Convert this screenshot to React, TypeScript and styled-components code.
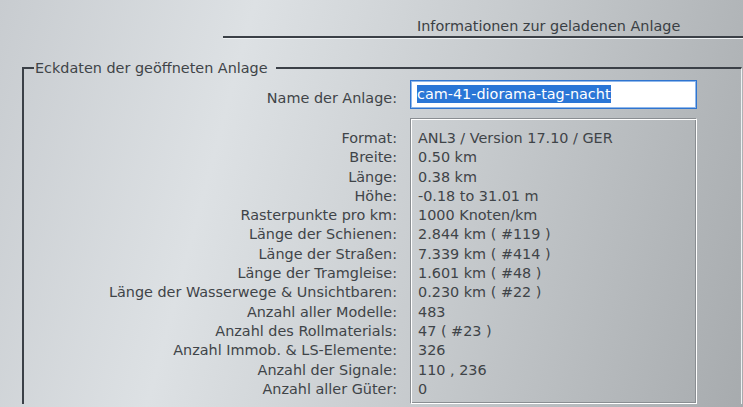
import React from "react";
import styled, { createGlobalStyle } from "styled-components";

const GlobalStyle = createGlobalStyle`
  html, body {
    margin: 0;
    padding: 0;
  }
  body {
    width: 743px;
    height: 407px;
    overflow: hidden;
    font-family: "DejaVu Sans", "Liberation Sans", sans-serif;
    font-size: 14.4px;
    color: #3f4448;
    background: linear-gradient(105deg, #c8ccd0 0%, #dde1e4 30%, #c7cbce 60%, #a7abae 100%);
  }
`;

const rows: [string, string][] = [
  ["Format:", "ANL3 / Version 17.10 / GER"],
  ["Breite:", "0.50 km"],
  ["Länge:", "0.38 km"],
  ["Höhe:", "-0.18 to 31.01 m"],
  ["Rasterpunkte pro km:", "1000 Knoten/km"],
  ["Länge der Schienen:", "2.844 km ( #119 )"],
  ["Länge der Straßen:", "7.339 km ( #414 )"],
  ["Länge der Tramgleise:", "1.601 km ( #48 )"],
  ["Länge der Wasserwege & Unsichtbaren:", "0.230 km ( #22 )"],
  ["Anzahl aller Modelle:", "483"],
  ["Anzahl des Rollmaterials:", "47 ( #23 )"],
  ["Anzahl Immob. & LS-Elemente:", "326"],
  ["Anzahl der Signale:", "110 , 236"],
  ["Anzahl aller Güter:", "0"],
];

function App() {
  return (
    <>
      <GlobalStyle />
      <Header>Informationen zur geladenen Anlage</Header>
      <Group>
        <Legend>Eckdaten der geöffneten Anlage</Legend>
        <Form>
          <Label>Name der Anlage:</Label>
          <NameField>
            <Selected>cam-41-diorama-tag-nacht</Selected>
          </NameField>
          <LabelList>
            {rows.map(([label]) => (
              <Line key={label}>{label}</Line>
            ))}
          </LabelList>
          <ValueBox>
            {rows.map(([label, value]) => (
              <Line key={label}>{value}</Line>
            ))}
          </ValueBox>
        </Form>
      </Group>
    </>
  );
}

export default App;

const Header = styled.div`
  box-sizing: border-box;
  height: 38px;
  margin-left: 223px;
  padding: 17px 0 0 194px;
  line-height: 18px;
  white-space: nowrap;
  color: #3a3f44;
  border-bottom: 2px solid #3b4047;
  box-shadow: 0 1px 0 #eef1f3;
`;

const Group = styled.fieldset`
  box-sizing: border-box;
  width: 720px;
  margin: 22px 0 0 22px;
  padding: 4px 0 0 0;
  border: none;
  border-top: 2px solid #3b4047;
  border-left: 2px solid #3b4047;
  border-right: 1px solid #eef1f3;
`;

const Legend = styled.legend`
  margin-left: 10px;
  padding: 0 8px 0 1px;
  line-height: 16px;
  white-space: nowrap;
`;

const Form = styled.div`
  display: grid;
  grid-template-columns: 373px 287px;
  column-gap: 13px;
  row-gap: 9px;
`;

const Label = styled.div`
  align-self: center;
  padding-top: 6px;
  text-align: right;
  white-space: nowrap;
`;

const NameField = styled.div`
  box-sizing: border-box;
  height: 29px;
  padding: 4px 6px;
  background: #ffffff;
  border: 1px solid #2f74cf;
  box-shadow: inset 0 0 0 1px #8fb8ec;
`;

const Selected = styled.span`
  display: inline-block;
  line-height: 18px;
  color: #ffffff;
  background: #2a76d6;
`;

const LabelList = styled.div`
  padding-top: 11px;
  text-align: right;
`;

const ValueBox = styled.div`
  box-sizing: border-box;
  height: 286px;
  padding: 10px 0 0 7px;
  border: 1px solid;
  border-color: #8a8e92 #ffffff #ffffff #8a8e92;
  box-shadow: inset 1px 1px 0 #ffffff, inset -1px -1px 0 #8a8e92;
`;

const Line = styled.div`
  height: 19.3px;
  line-height: 19.3px;
  white-space: nowrap;
`;
